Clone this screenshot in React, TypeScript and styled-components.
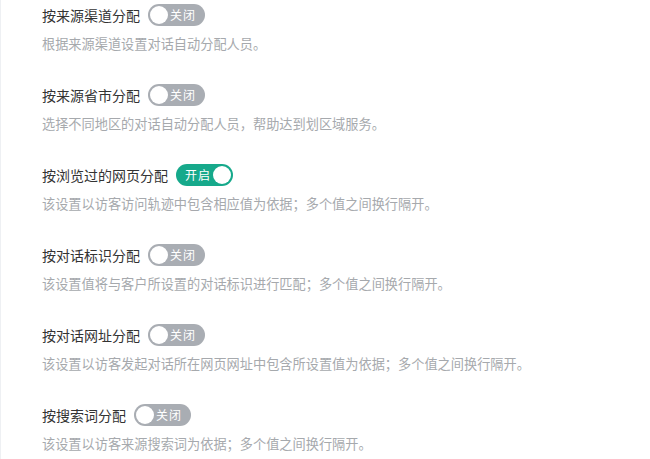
import React from "react";
import styled, { createGlobalStyle } from "styled-components";

const Global = createGlobalStyle`
  html, body { margin: 0; padding: 0; background: #ffffff; }
  body { font-family: "Noto Sans CJK SC", "Noto Sans", sans-serif; }
`;

const Page = styled.div`
  width: 650px;
  height: 459px;
  box-sizing: border-box;
  border-left: 1px solid #eef0f3;
  padding: 0 0 0 41px;
  overflow: hidden;
  background: #fff;
`;

const Section = styled.div`
  display: flex;
  flex-direction: column;
  margin-bottom: 26px;
`;

const Header = styled.div`
  display: flex;
  align-items: center;
  height: 30px;
  gap: 8px;
`;

const Title = styled.span`
  font-size: 14px;
  color: #333;
  line-height: 30px;
  white-space: nowrap;
`;

const Desc = styled.div`
  margin-top: 4px;
  font-size: 13.2px;
  line-height: 20px;
  color: #a6a9ad;
  white-space: nowrap;
`;

const Switch = styled.div<{ $on: boolean }>`
  display: flex;
  align-items: center;
  flex-direction: ${(p) => (p.$on ? "row" : "row-reverse")};
  justify-content: space-between;
  width: 57px;
  height: 22px;
  box-sizing: border-box;
  padding-left: ${(p) => (p.$on ? "9px" : "2px")};
  padding-right: ${(p) => (p.$on ? "2px" : "9px")};
  border-radius: 11px;
  background: ${(p) => (p.$on ? "#16a98b" : "#a9adb3")};
`;

const SwitchText = styled.span`
  font-size: 12px;
  color: #fff;
  line-height: 22px;
  letter-spacing: 1px;
`;

const Knob = styled.span`
  width: 18px;
  height: 18px;
  border-radius: 50%;
  background: #fff;
`;

const items = [
  { title: "按来源渠道分配", on: false, desc: "根据来源渠道设置对话自动分配人员。" },
  { title: "按来源省市分配", on: false, desc: "选择不同地区的对话自动分配人员，帮助达到划区域服务。" },
  { title: "按浏览过的网页分配", on: true, desc: "该设置以访客访问轨迹中包含相应值为依据；多个值之间换行隔开。" },
  { title: "按对话标识分配", on: false, desc: "该设置值将与客户所设置的对话标识进行匹配；多个值之间换行隔开。" },
  { title: "按对话网址分配", on: false, desc: "该设置以访客发起对话所在网页网址中包含所设置值为依据；多个值之间换行隔开。" },
  { title: "按搜索词分配", on: false, desc: "该设置以访客来源搜索词为依据；多个值之间换行隔开。" },
];

export default function App() {
  return (
    <>
      <Global />
      <Page>
        {items.map((it) => (
          <Section key={it.title}>
            <Header>
              <Title>{it.title}</Title>
              <Switch $on={it.on}>
                <SwitchText>{it.on ? "开启" : "关闭"}</SwitchText>
                <Knob />
              </Switch>
            </Header>
            <Desc>{it.desc}</Desc>
          </Section>
        ))}
      </Page>
    </>
  );
}
